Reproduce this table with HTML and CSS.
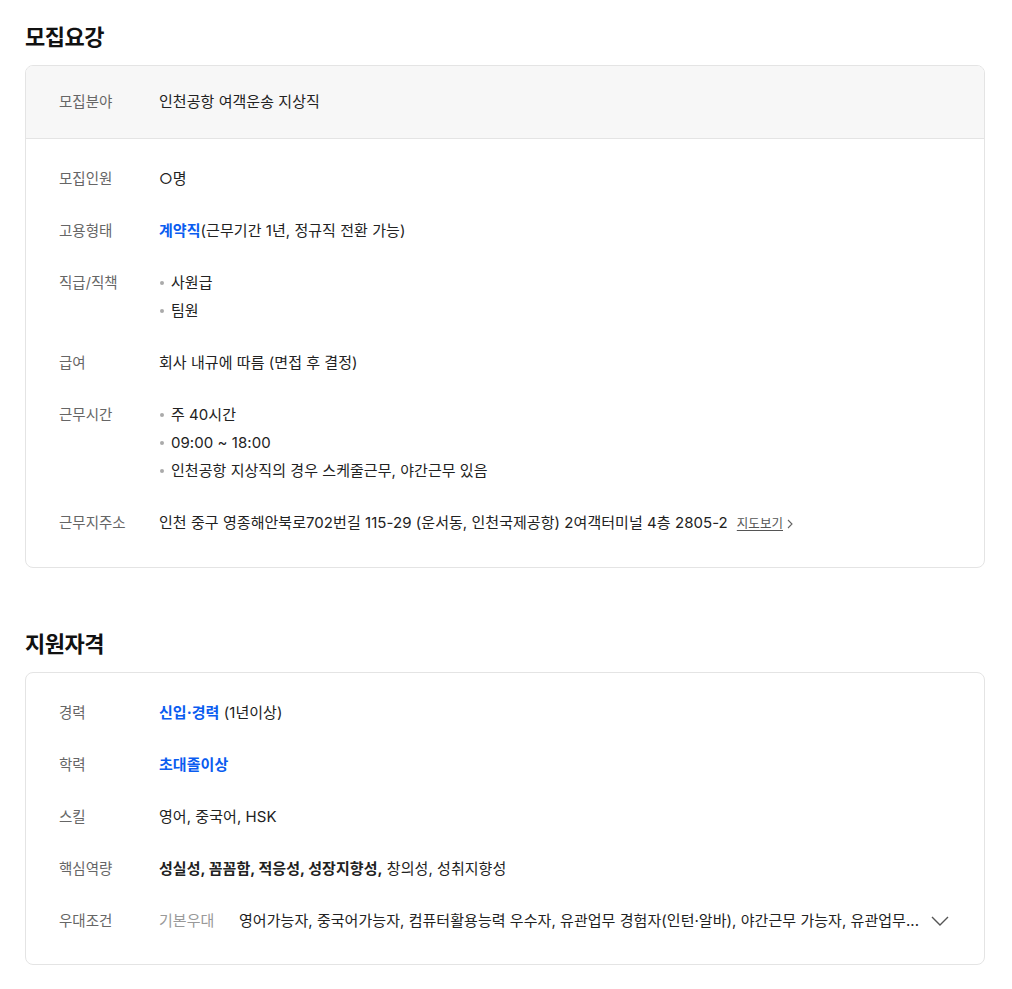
FILE: index.html
```html
<!DOCTYPE html>
<html lang="ko">
<head>
<meta charset="utf-8">
<link rel="stylesheet" href="styles.css">
</head>
<body>
<div class="page">
  <section class="section">
    <h2 class="title">모집요강</h2>
    <div class="card">
      <div class="band">
        <div class="row">
          <div class="label">모집분야</div>
          <div class="value">인천공항 여객운송 지상직</div>
        </div>
      </div>
      <div class="body">
        <div class="row">
          <div class="label">모집인원</div>
          <div class="value">○명</div>
        </div>
        <div class="row">
          <div class="label">고용형태</div>
          <div class="value"><strong class="blue">계약직</strong>(근무기간 1년, 정규직 전환 가능)</div>
        </div>
        <div class="row">
          <div class="label">직급/직책</div>
          <ul class="value list">
            <li>사원급</li>
            <li>팀원</li>
          </ul>
        </div>
        <div class="row">
          <div class="label">급여</div>
          <div class="value">회사 내규에 따름 (면접 후 결정)</div>
        </div>
        <div class="row">
          <div class="label">근무시간</div>
          <ul class="value list">
            <li>주 40시간</li>
            <li>09:00 ~ 18:00</li>
            <li>인천공항 지상직의 경우 스케줄근무, 야간근무 있음</li>
          </ul>
        </div>
        <div class="row">
          <div class="label">근무지주소</div>
          <div class="value">인천 중구 영종해안북로702번길 115-29 (운서동, 인천국제공항) 2여객터미널 4층 2805-2<a class="map">지도보기<svg class="chev-r" width="6" height="10" viewBox="0 0 6 10"><path d="M1 1l4 4-4 4" fill="none" stroke="#666" stroke-width="1.1"/></svg></a></div>
        </div>
      </div>
    </div>
  </section>

  <section class="section second">
    <h2 class="title">지원자격</h2>
    <div class="card">
      <div class="body">
        <div class="row">
          <div class="label">경력</div>
          <div class="value"><strong class="blue">신입·경력</strong> (1년이상)</div>
        </div>
        <div class="row">
          <div class="label">학력</div>
          <div class="value"><strong class="blue">초대졸이상</strong></div>
        </div>
        <div class="row">
          <div class="label">스킬</div>
          <div class="value">영어, 중국어, HSK</div>
        </div>
        <div class="row">
          <div class="label">핵심역량</div>
          <div class="value"><strong>성실성, 꼼꼼함, 적응성, 성장지향성,</strong> 창의성, 성취지향성</div>
        </div>
        <div class="row">
          <div class="label">우대조건</div>
          <div class="value pref">
            <span class="sub">기본우대</span>
            <span class="pref-text">영어가능자, 중국어가능자, 컴퓨터활용능력 우수자, 유관업무 경험자(인턴·알바), 야간근무 가능자, 유관업무...</span>
            <svg class="chev-d" width="18" height="10" viewBox="0 0 18 10"><path d="M1 1l8 8 8-8" fill="none" stroke="#555" stroke-width="1.4"/></svg>
          </div>
        </div>
      </div>
    </div>
  </section>
</div>
</body>
</html>
```

FILE: styles.css
```css
* { box-sizing: border-box; }
html, body { margin: 0; padding: 0; background: #fff; }
body {
  font-family: Inter, "Noto Sans CJK KR", sans-serif;
  color: #222;
  font-size: 15px;
}
.page { padding: 22px 27px 0 25px; }
.section.second { margin-top: 61px; }
.title {
  margin: 0 0 13px;
  font-size: 22px;
  line-height: 30px;
  font-weight: 700;
  color: #111;
  letter-spacing: -0.5px;
}
.card {
  border: 1px solid #e4e4e4;
  border-radius: 8px;
  overflow: hidden;
}
.band {
  background: #f7f7f7;
  border-bottom: 1px solid #e4e4e4;
  padding: 24px 33px;
}
.body {
  padding: 28px 33px 31px;
  display: flex;
  flex-direction: column;
  gap: 28px;
}
.row {
  display: flex;
  align-items: flex-start;
  line-height: 24px;
}
.label {
  width: 100px;
  flex: none;
  color: #666;
  font-size: 14.5px;
}
.value {
  flex: 1;
  min-width: 0;
  color: #222;
  font-size: 15px;
  letter-spacing: 0.05px;
}
.blue { color: #0a5cf0; font-weight: 700; }
.value strong { font-weight: 700; }
.list { margin: 0; padding: 0; list-style: none; }
.list li { position: relative; padding-left: 12px; }
.list li + li { margin-top: 4px; }
.list li::before {
  content: "";
  position: absolute;
  left: 1px;
  top: 10px;
  width: 4px;
  height: 4px;
  border-radius: 50%;
  background: #aaa;
}
.map {
  margin-left: 9px;
  font-size: 12.5px;
  color: #555;
  text-decoration: underline;
  text-underline-offset: 2px;
  cursor: pointer;
}
.chev-r { margin-left: 4px; vertical-align: -1px; }
.pref { display: flex; align-items: center; }
.sub { width: 80px; flex: none; color: #999; }
.pref-text {
  flex: 1;
  min-width: 0;
  white-space: nowrap;
  margin-right: 18px;
}
.chev-d { flex: none; margin-right: 2px; }
```
